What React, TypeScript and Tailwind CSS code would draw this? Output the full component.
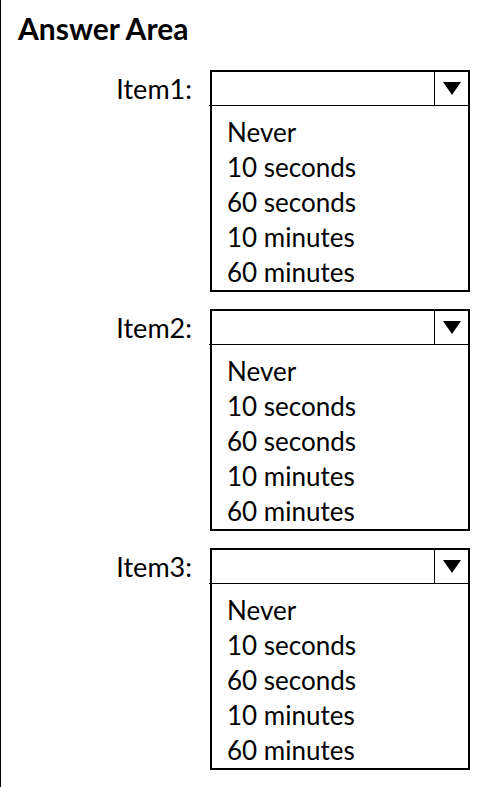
import React from "react";

const options = ["Never", "10 seconds", "60 seconds", "10 minutes", "60 minutes"];

function DropBox({ label }: { label: string }) {
  return (
    <div className="flex items-start">
      <div className="w-[209px] pr-[18px] text-right h-[36px] flex items-center justify-end text-[27px] leading-none text-black">
        {label}
      </div>
      <div className="w-[260px] border-2 border-black flex flex-col">
        <div className="relative flex h-[34px] border-b border-black">
          <div className="flex-1" />
          <div className="w-[34px] border-l border-black flex items-center justify-center">
            <svg width="20" height="15" viewBox="0 0 20 15">
              <polygon points="1,1 19,1 10,14" fill="black" />
            </svg>
          </div>
          <div className="absolute left-[-3px] bottom-[-1px] w-[2px] h-px bg-black" />
        </div>
        <div className="flex flex-col pl-[15px] pt-[8px] pb-[1px]">
          {options.map((o) => (
            <div key={o} className="h-[35px] flex items-center text-[26px] leading-none text-black">
              {o}
            </div>
          ))}
        </div>
      </div>
    </div>
  );
}

export default function App() {
  return (
    <div
      className="w-[480px] h-[787px] bg-white border-l border-black overflow-hidden"
      style={{ fontFamily: "Lato, 'Open Sans', sans-serif" }}
    >
      <div className="pl-[17px] pt-[13px] h-[70px] text-[30px] font-bold leading-none text-black">
        Answer Area
      </div>
      <div className="flex flex-col gap-[17px]">
        <DropBox label="Item1:" />
        <DropBox label="Item2:" />
        <DropBox label="Item3:" />
      </div>
    </div>
  );
}
